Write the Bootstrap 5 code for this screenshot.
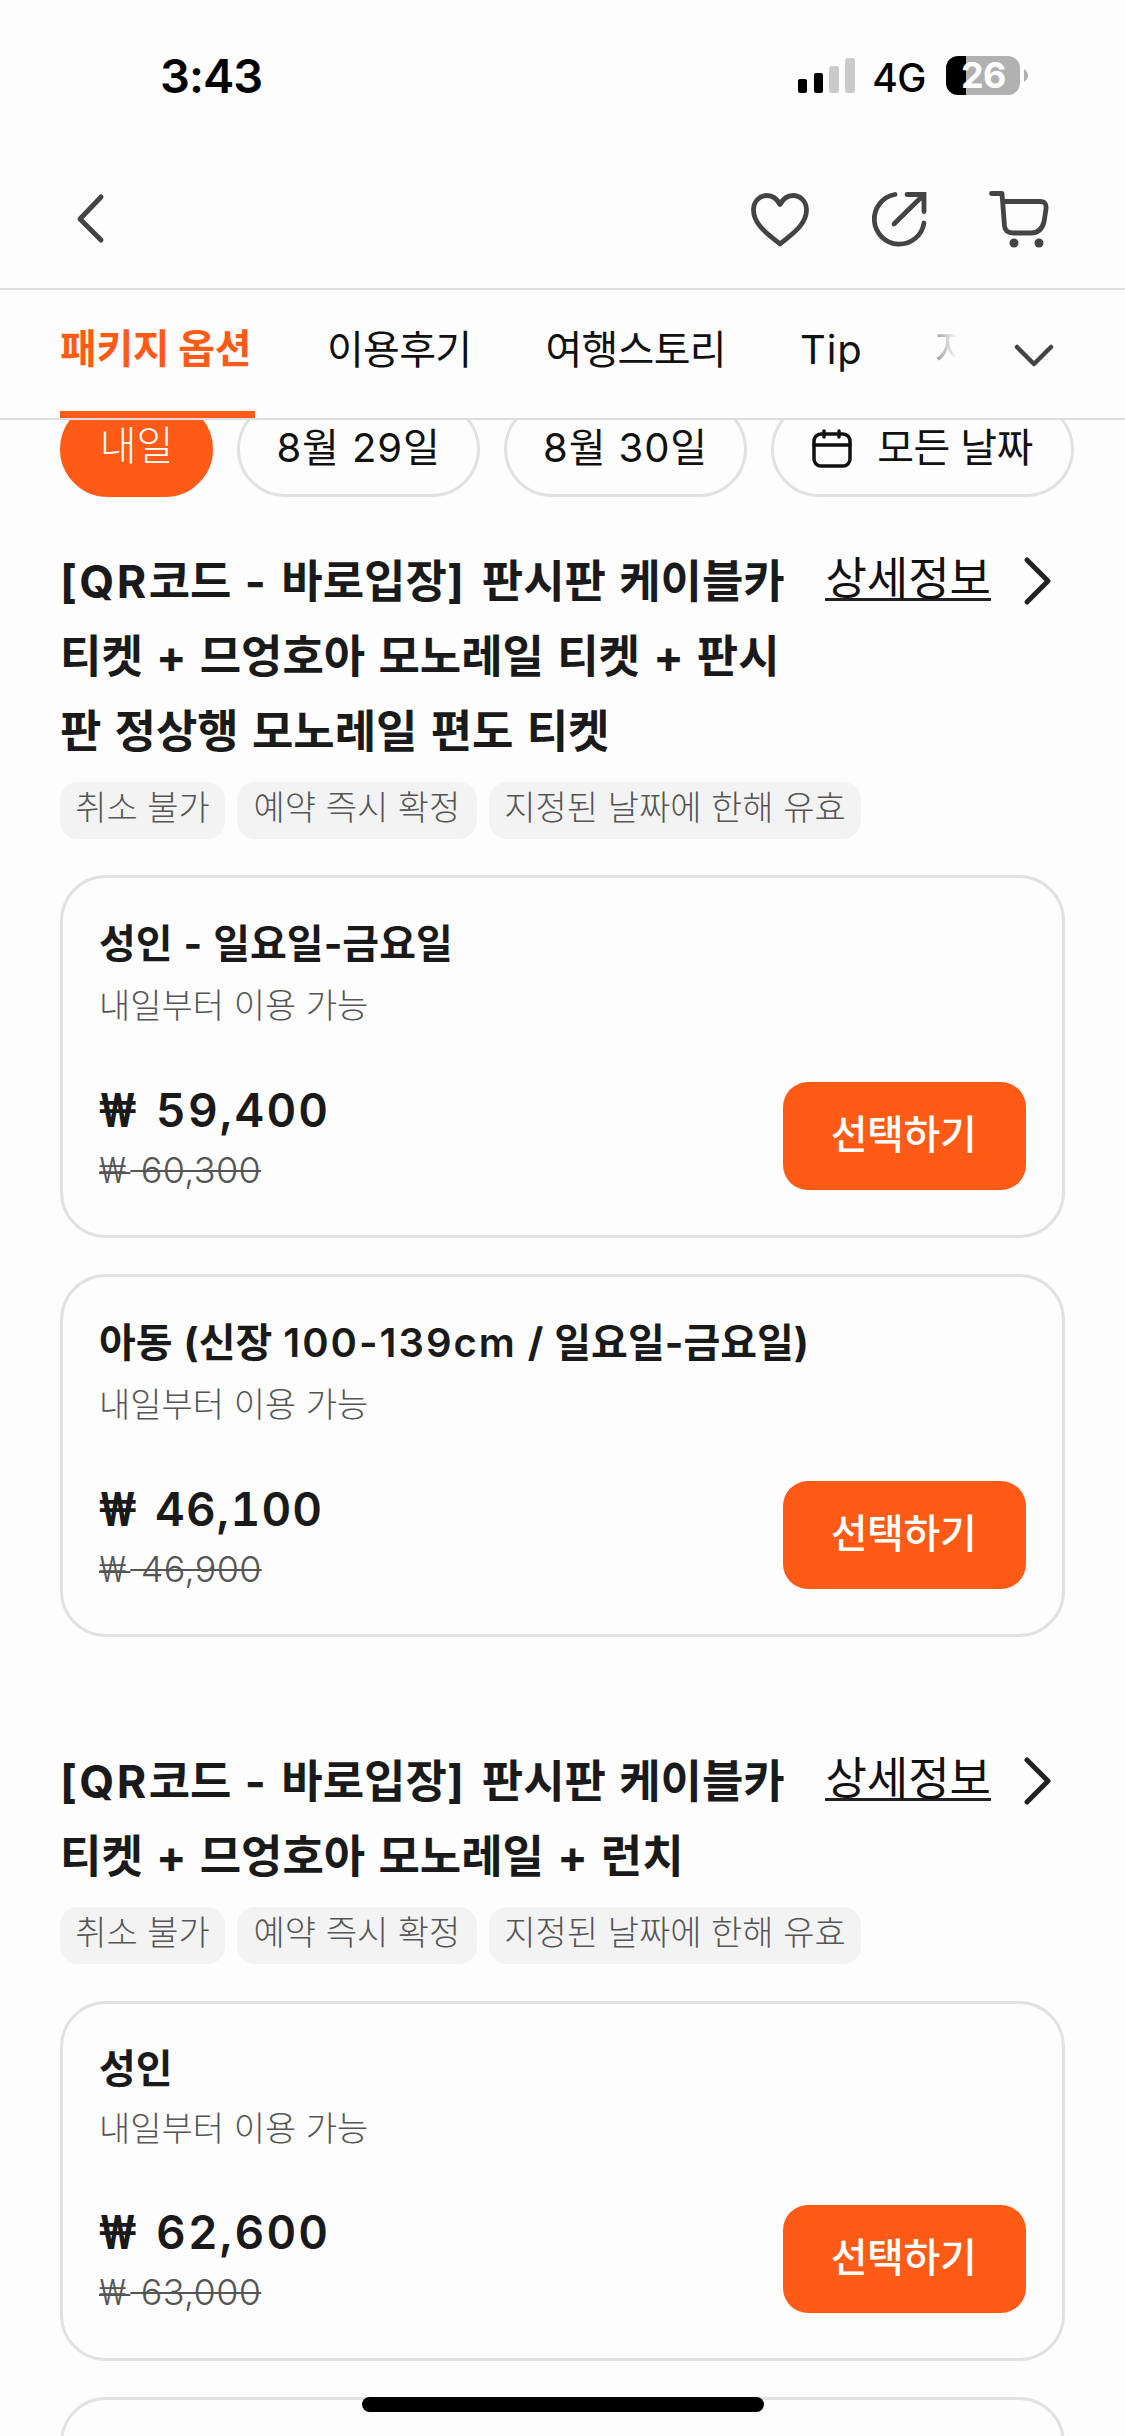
<!DOCTYPE html>
<html lang="ko">
<head>
<meta charset="utf-8">
<meta name="viewport" content="width=device-width, initial-scale=1">
<title>패키지 옵션</title>
<link href="https://cdn.jsdelivr.net/npm/bootstrap@5.3.0/dist/css/bootstrap.min.css" rel="stylesheet">
<style>
:root{--brand:#ff5b17;--ink:#1a1a1a;--soft:#555;--edge:#e1e1e1}
body{width:1125px;height:2436px;overflow:hidden;background:#fdfdfd;color:#111;font-family:Inter,"Noto Sans CJK KR",sans-serif;font-size:40px;line-height:1}
svg{display:block;flex:none}
.statusbar{height:150px;padding:52px 96px 0 160px}
.clock{font-size:47px;font-weight:600;line-height:48px;color:#000;letter-spacing:-1px}
.net{font-size:39px;font-weight:500;line-height:46px;color:#000;letter-spacing:-.5px;margin:3px 20px 0 16px}
.bars{margin-top:6px}
.battery{width:74px;height:39px;margin-top:4px;border-radius:12px;background:linear-gradient(90deg,#000 20px,#b1b1b1 20px);color:#fff;font-size:36px;font-weight:700;line-height:39px;padding-left:15px;letter-spacing:-.6px}
.cap{margin-top:17px}
.appbar{height:140px;padding:0 74px 0 72px;border-bottom:2px solid #dedede}
.actions{gap:57px}
.tabs{height:130px;border-bottom:2px solid #dedede;padding-left:60px}
.tabitem{height:128px;line-height:38px;padding-top:41px;white-space:nowrap;letter-spacing:-.7px}
.tabitem.on{color:var(--brand);font-weight:700;padding-top:40px;border-bottom:7px solid var(--brand);border-radius:5px 5px 0 0;width:195px;letter-spacing:-.4px}
.tabitem + .tabitem{margin-left:74px}
.tabitem.on + .tabitem{margin-left:72px}
.tabitem + .fade-end{margin-left:72px}
.fade-end{background:linear-gradient(90deg,#999,#fdfdfd 22px);-webkit-background-clip:text;background-clip:text;color:transparent}
.drop{margin:50px 69px 0 0}
.chips{height:77px;overflow:hidden;padding-left:60px;gap:24px}
.chip{height:96px;flex:none;border:3px solid var(--edge);border-radius:48px;line-height:88px;text-align:center;white-space:nowrap}
.chip.on{background:var(--brand);border-color:var(--brand);color:#fff;font-weight:300;line-height:84px}
.day{letter-spacing:.9px}
.cal{margin:25px 25px 0 0}
.all{letter-spacing:-.6px}
.pkg{padding:46px 60px 0}
.pkg + .pkg{padding-top:106px}
.pkg + .pkg .tags{margin-top:14px}
.pkg + .pkg .option.short{margin-top:37px}
.pkg-title{font-size:45px;font-weight:700;line-height:75px;color:var(--ink);width:740px;white-space:nowrap;margin:1px 0 -1px;word-spacing:2.5px}
.wide{letter-spacing:2.4px}
.detail{font-size:45px;line-height:75px;color:#111;white-space:nowrap}
.detail span{height:57px;line-height:69px;border-bottom:3px solid #222;margin-top:1px}
.more{margin:10px 9px 0 29px}
.tags{gap:12px;margin:14px 0 36px}
.tag{height:57px;border-radius:18px;background:#f3f3f3;color:var(--soft);font-size:34px;font-weight:300;line-height:51px;text-align:center;white-space:nowrap}
.option{height:363px;border:3px solid var(--edge);border-radius:46px;background:#fdfdfd;padding:39px 36px 0;margin-bottom:36px}
.option.short{height:360px;padding-top:38px}
.option h3{font-size:40px;font-weight:700;line-height:54px;color:var(--ink);margin:0;white-space:nowrap;word-spacing:1.5px}
.measure{letter-spacing:2px;font-weight:600}
.avail{font-size:34px;font-weight:300;line-height:60px;color:var(--soft);margin-top:5px}
.option.short .avail{margin-top:3px}
.sums{margin-top:44px}
.option.short .sums{margin-top:43px}
.price{font-size:46px;font-weight:600;line-height:60px;color:var(--ink);letter-spacing:2.2px;font-variant-numeric:tabular-nums}
.price.tight{letter-spacing:1.2px}
.was{font-size:36px;font-weight:300;line-height:60px;color:var(--soft);text-decoration:line-through;text-decoration-thickness:2px;letter-spacing:.3px}
.won{font-family:Roboto,"Noto Sans CJK KR",sans-serif;letter-spacing:4px}
.price .won{font-weight:500;font-size:48px;letter-spacing:5px;line-height:1}
.buy{margin-top:46px}
.pick{width:243px;height:108px;border:0;border-radius:25px;background:var(--brand);color:#fff;font-size:40px;font-weight:500;padding:0 2px 2px 0;letter-spacing:-.4px}
.peek{height:40px;overflow:hidden;margin-top:36px}
.home{position:fixed;left:362px;bottom:24px;width:402px;height:15px;border-radius:8px;background:#000}
</style>
</head>
<body>
<header>
  <div class="statusbar d-flex justify-content-between align-items-start">
    <div class="clock">3:43</div>
    <div class="d-flex align-items-start">
      <svg class="bars" width="58" height="36" viewBox="0 0 58 36"><rect x="0" y="21" width="9" height="14" rx="2"/><rect x="16" y="15" width="9" height="20" rx="2"/><g fill="#cacaca"><rect x="31" y="8" width="10" height="27" rx="3"/><rect x="47" y="0" width="10" height="35" rx="3"/></g></svg>
      <div class="net">4G</div>
      <div class="battery">26</div>
      <svg class="cap" width="9" height="14" viewBox="0 0 9 14"><path d="M4 0q4 3 4 6.500t-4 6.500z" fill="#b1b1b1"/></svg>
    </div>
  </div>
  <div class="appbar d-flex justify-content-between align-items-center">
    <svg width="36" height="56" viewBox="0 0 36 56" fill="none" stroke="#444" stroke-width="5" stroke-linecap="round" stroke-linejoin="round"><path d="M29 6 8 28l21 21"/></svg>
    <div class="actions d-flex">
      <svg width="64" height="60" viewBox="0 0 64 60" fill="none" stroke="#444" stroke-width="4.800" stroke-linejoin="round"><path d="M31 55C23 48 4.500 37 4.500 21 4.500 12 11 6.500 18 6.500c6 0 10 3.500 13 9 3-5.500 7-9 13-9 7 0 13.500 5.500 13.500 14.500C57.500 37 39 48 31 55z"/></svg>
      <svg width="60" height="60" viewBox="0 0 60 60" fill="none" stroke="#444" stroke-width="4.800" stroke-linecap="round"><path d="M25 5.500A25 25 0 1 0 54 34M37 5.500h17v17M54 5.500 24 35"/></svg>
      <svg width="64" height="60" viewBox="0 0 64 60" fill="none" stroke="#444" stroke-width="4.800" stroke-linecap="round" stroke-linejoin="round"><path d="M4.500 4.500H15L17.500 37q.7 7 9 7H44q10 0 13-11l2-13q1-7.500-6-7.500H16"/><g fill="#444" stroke="none"><circle cx="27" cy="54" r="4.500"/><circle cx="52" cy="54" r="4.500"/></g></svg>
    </div>
  </div>
  <nav class="tabs d-flex">
    <div class="tabitem on">패키지 옵션</div>
    <div class="tabitem">이용후기</div>
    <div class="tabitem">여행스토리</div>
    <div class="tabitem"><span class="day">Tip</span></div>
    <div class="tabitem fade-end">지</div>
    <svg class="drop ms-auto" width="44" height="30" viewBox="0 0 44 30" fill="none" stroke="#444" stroke-width="4.500" stroke-linecap="round" stroke-linejoin="round"><path d="m5 7 17 17L39 7"/></svg>
  </nav>
</header>

<div class="chips d-flex align-items-end">
  <div class="chip on" style="width:153px">내일</div>
  <div class="chip day" style="width:243px">8월 29일</div>
  <div class="chip day" style="width:243px">8월 30일</div>
  <div class="chip d-flex justify-content-center" style="width:303px">
    <svg class="cal" width="40" height="40" viewBox="0 0 40 40" fill="none" stroke="#111" stroke-width="3.500" stroke-linecap="round"><rect x="2" y="5" width="36" height="32" rx="7"/><path d="M2 16h36M12 2v6M27 2v6"/></svg>
    <span class="all">모든 날짜</span>
  </div>
</div>

<main>
  <section class="pkg">
    <div class="d-flex justify-content-between align-items-start">
      <h2 class="pkg-title"><span class="wide">[QR</span>코드 <span class="wide">-</span> 바로입장<span class="wide">] </span>판시판 케이블카<br>티켓 + 므엉호아 모노레일 티켓 + 판시<br>판 정상행 모노레일 편도 티켓</h2>
      <div class="detail d-flex"><span>상세정보</span>
        <svg class="more" width="36" height="56" viewBox="0 0 36 56" fill="none" stroke="#222" stroke-width="5" stroke-linecap="round" stroke-linejoin="round"><path d="m7 7 21 21L7 49"/></svg></div>
    </div>
    <div class="tags d-flex"><div class="tag" style="width:165px">취소 불가</div><div class="tag" style="width:240px">예약 즉시 확정</div><div class="tag" style="width:372px">지정된 날짜에 한해 유효</div></div>
    <article class="option"><h3>성인 - 일요일-금요일</h3><div class="avail">내일부터 이용 가능</div>
      <div class="d-flex justify-content-between"><div class="sums"><div class="price"><span class="won">₩</span> 59,400</div><div class="was d-inline-block"><span class="won">₩</span> 60,300</div></div><div class="buy"><button class="btn pick">선택하기</button></div></div></article>
    <article class="option mb-0"><h3>아동 (신장 <span class="measure">100-139cm</span> / 일요일-금요일)</h3><div class="avail">내일부터 이용 가능</div>
      <div class="d-flex justify-content-between"><div class="sums"><div class="price tight"><span class="won">₩</span> 46,100</div><div class="was d-inline-block"><span class="won">₩</span> 46,900</div></div><div class="buy"><button class="btn pick">선택하기</button></div></div></article>
  </section>
  <section class="pkg">
    <div class="d-flex justify-content-between align-items-start">
      <h2 class="pkg-title"><span class="wide">[QR</span>코드 <span class="wide">-</span> 바로입장<span class="wide">] </span>판시판 케이블카<br>티켓 + 므엉호아 모노레일 + 런치</h2>
      <div class="detail d-flex"><span>상세정보</span>
        <svg class="more" width="36" height="56" viewBox="0 0 36 56" fill="none" stroke="#222" stroke-width="5" stroke-linecap="round" stroke-linejoin="round"><path d="m7 7 21 21L7 49"/></svg></div>
    </div>
    <div class="tags d-flex"><div class="tag" style="width:165px">취소 불가</div><div class="tag" style="width:240px">예약 즉시 확정</div><div class="tag" style="width:372px">지정된 날짜에 한해 유효</div></div>
    <article class="option short mb-0"><h3>성인</h3><div class="avail">내일부터 이용 가능</div>
      <div class="d-flex justify-content-between"><div class="sums"><div class="price"><span class="won">₩</span> 62,600</div><div class="was d-inline-block"><span class="won">₩</span> 63,000</div></div><div class="buy"><button class="btn pick">선택하기</button></div></div></article>
    <div class="peek"><article class="option"></article></div>
  </section>
</main>
<div class="home"></div>
<script src="https://cdn.jsdelivr.net/npm/bootstrap@5.3.0/dist/js/bootstrap.bundle.min.js"></script>
</body>
</html>
